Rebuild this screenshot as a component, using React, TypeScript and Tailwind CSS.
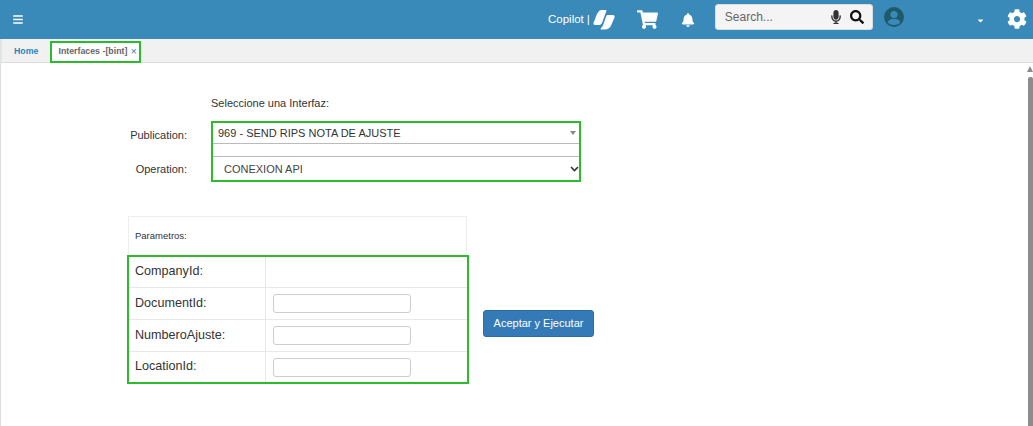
import { FaBars, FaShoppingCart, FaBell, FaSearch, FaMicrophone, FaCog, FaCaretDown } from 'react-icons/fa';

const params = [
  { label: 'CompanyId:', input: false },
  { label: 'DocumentId:', input: true },
  { label: 'NumberoAjuste:', input: true },
  { label: 'LocationId:', input: true },
];

function CopilotLogo() {
  return (
    <svg width="22" height="20" viewBox="0 0 22 20" fill="white">
      <path d="M6 1 Q7 0 9 0 L13 0 Q14 0 13 2 L9 13 Q8 15 6 15 L2 15 Q0 15 0.5 13 L4 4 Z" />
      <path d="M13.5 5.5 Q14 5 15 5 L20 5 Q22 5 21.5 7.5 L18.5 14.5 Q16.5 19.5 12 19.5 L8 19.5 Q7 19.5 8 18 Q9.5 17 10.5 14 Z" />
    </svg>
  );
}

function Avatar() {
  return (
    <svg width="20" height="20" viewBox="0 0 20 20">
      <circle cx="10" cy="10" r="10" fill="#1f5a6b" />
      <circle cx="10" cy="7.5" r="3.6" fill="#3a8ab9" />
      <path d="M3.6 15.5 Q5 11.8 10 11.8 Q15 11.8 16.4 15.5 Q13.8 18 10 18 Q6.2 18 3.6 15.5 Z" fill="#3a8ab9" />
    </svg>
  );
}

export default function App() {
  return (
    <div className="w-[1033px] h-[426px] overflow-hidden bg-white text-[#333] font-['Liberation_Sans',Arial,sans-serif]">
      <header className="h-[39px] bg-[#3a8ab9] flex items-center pl-[13px] text-white">
        <FaBars className="text-[11px] w-[10px]" />
        <span className="ml-[525px] text-[11.5px] leading-none">Copilot</span>
        <span className="ml-[3px] text-[11.5px] leading-none">|</span>
        <span className="ml-[3px] flex"><CopilotLogo /></span>
        <FaShoppingCart className="ml-[22px] text-[21px]" />
        <FaBell className="ml-[23px] text-[14px]" />
        <div className="ml-[20px] w-[158px] h-[26px] -mt-[5px] bg-[#f4f4f4] rounded-[3px] border border-[#ddd] flex items-center pl-[9px] text-[12px] text-[#666]">
          <span>Search...</span>
          <FaMicrophone className="ml-[56px] text-[14px] text-[#333]" />
          <FaSearch className="ml-[7px] text-[14px] text-[#111]" />
        </div>
        <span className="ml-[11px] -mt-[5px] flex"><Avatar /></span>
        <FaCaretDown className="ml-[72px] mt-[2px] text-[9px]" />
        <FaCog className="ml-[22px] -mt-[1px] text-[20px]" />
      </header>

      <div className="h-[24px] bg-[#f1f1f1] border-b border-[#ddd] border-l-2 border-l-[#e4e4e4] flex items-end pl-[12px] text-[8.8px] font-bold whitespace-nowrap">
        <span className="text-[#2a87c0] h-[21px] flex items-center">Home</span>
        <div className="ml-[12px] w-[91px] h-[22px] border-2 border-[#2dbb2d] bg-white flex items-center pl-[6px] text-[#666] -mb-px">
          <span>Interfaces -[bint]</span>
          <span className="ml-[3px] mb-[2px] text-[#3f7fae] text-[11px] font-normal leading-none">×</span>
        </div>
      </div>

      <main className="relative h-[363px] border-l border-[#ddd] pl-[126px] pt-[33px]">
        <span className="absolute right-0 top-[3px] w-0 h-0 border-x-[3px] border-x-transparent border-b-[6px] border-b-[#8c8c8c]" />
        <span className="absolute right-0 top-[14px] bottom-0 w-[5px] bg-[#8c8c8c] rounded-t-[2px]" />
        <p className="ml-[84px] text-[11px] leading-[14px]">Seleccione una Interfaz:</p>

        <div className="flex mt-[11px]">
          <div className="w-[60px] shrink-0 text-[11px] text-right">
            <div className="h-[27px] pt-[6px]">Publication:</div>
            <div className="mt-[8px] pt-[5px]">Operation:</div>
          </div>
          <div className="ml-[24px] w-[370px] h-[61px] border-2 border-[#2dbb2d]">
            <div className="h-[21px] border-b border-[#bbb] flex items-center justify-between pl-[5px] pr-[3px] text-[11px]">
              <span>969 - SEND RIPS NOTA DE AJUSTE</span>
              <span className="w-0 h-0 border-x-[3px] border-x-transparent border-t-[4px] border-t-[#888]" />
            </div>
            <div className="mt-[12px] h-[24px] border-t border-[#bbb] flex items-center justify-between pl-[11px] pt-[1px] text-[11px] text-[#444]">
              <span>CONEXION API</span>
              <svg width="9" height="6" viewBox="0 0 9 6" fill="none" stroke="#333" strokeWidth="1.6"><path d="M1 1l3.5 3.5L8 1" /></svg>
            </div>
          </div>
        </div>

        <div className="flex items-end mt-[34px]">
          <div className="w-[342px]">
            <div className="ml-[1px] w-[339px] h-[39px] border border-[#eee] border-b-0 flex items-center pl-[6px] text-[9.5px]">Parametros:</div>
            <div className="border-2 border-[#2dbb2d] h-[129px] grid grid-rows-[30px_32px_32px_31px]">
              {params.map((p, i) => (
                <div key={p.label} className={`flex ${i > 0 ? 'border-t border-[#e8e8e8]' : ''}`}>
                  <div className="w-[137px] border-r border-[#e8e8e8] pl-[6px] pb-[1px] text-[12.6px] flex items-center">{p.label}</div>
                  {p.input && (
                    <div className="flex items-center pl-[7px]">
                      <input className="w-[138px] h-[19px] bg-white border border-[#ccc] rounded-[3px]" />
                    </div>
                  )}
                </div>
              ))}
            </div>
          </div>
          <button className="ml-[14px] mb-[47px] w-[111px] h-[27px] bg-[#337ab7] border border-[#2e6da4] rounded-[3px] text-white text-[11px]">Aceptar y Ejecutar</button>
        </div>
      </main>
    </div>
  );
}
